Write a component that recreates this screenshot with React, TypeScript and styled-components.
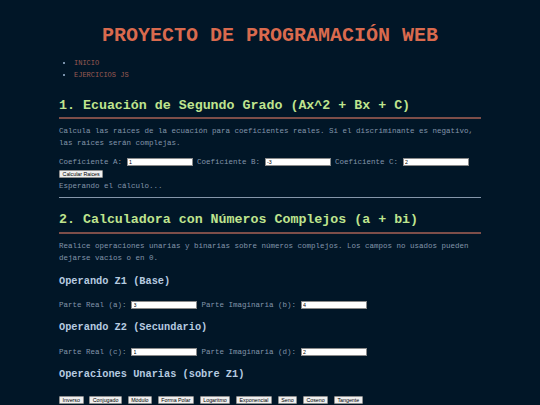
import styled, { createGlobalStyle } from "styled-components";

const GlobalStyle = createGlobalStyle`
    html, body {
        margin: 0;
        padding: 0;
        background-color: #011627;
    }
    body {
        font-family: "Courier New", "Nimbus Mono PS", "FreeMono", "Liberation Mono", monospace;
    }
`

const Page = styled.div`
    padding-top: 24px;
    min-height: 405px;
    box-sizing: border-box;
`
const Titulo = styled.h1`
    margin: 0;
    font-size: 20px;
    line-height: 24px;
    font-weight: bold;
    color: #d96a4e;
    text-align: center;
`
const Contenido = styled.main`
    width: 422px;
    margin: 0 auto;
`
const Menu = styled.ul`
    margin: 9px 0 0;
    padding-left: 15px;
    list-style: disc;
    font-size: 7px;
    line-height: 12px;

    li::marker {
        color: #9fb8d6;
    }
`
const Enlace = styled.a`
    color: #9a5a52;
    text-decoration: none;
`
const Seccion = styled.section<{ $top: number }>`
    margin-top: ${(p) => p.$top}px;
`
const Subtitulo = styled.h2`
    margin: 0;
    font-size: 13.3px;
    line-height: 16px;
    font-weight: bold;
    color: #bfe48e;
    padding-bottom: 3.5px;
    border-bottom: 2px solid #7d4e49;
`
const Texto = styled.p<{ $top?: number }>`
    margin: ${(p) => p.$top ?? 6}px 0 0;
    font-size: 7.5px;
    line-height: 12px;
    color: #8195aa;
`
const Fila = styled.div<{ $top: number }>`
    margin-top: ${(p) => p.$top}px;
    font-size: 7.5px;
    line-height: 12px;
    color: #8195aa;
    white-space: nowrap;
`
const Campo = styled.input`
    box-sizing: border-box;
    width: 66px;
    height: 8px;
    padding: 0 1.5px;
    margin: 0;
    border: 1px solid #8a8a8a;
    background: #ffffff;
    font-family: "Liberation Sans", Arial, sans-serif;
    font-size: 5.3px;
    color: #000000;
    vertical-align: middle;
`
const Boton = styled.button`
    box-sizing: border-box;
    height: 8px;
    padding: 0 2.6px;
    margin: 0;
    border: 1px solid #8f8f8f;
    border-radius: 1px;
    background: #efefef;
    font-family: "Liberation Sans", Arial, sans-serif;
    font-size: 5.3px;
    line-height: 6px;
    color: #000000;
    vertical-align: middle;
`
const Linea = styled.hr`
    margin: 5px 0 0;
    border: 0;
    border-top: 1.5px solid #8596aa;
`
const Operando = styled.h3<{ $top: number }>`
    margin: ${(p) => p.$top}px 0 0;
    font-size: 10.3px;
    line-height: 14px;
    font-weight: bold;
    color: #b6cbe0;
`
const Botonera = styled.div`
    display: flex;
    gap: 5.6px;
    margin-top: 15px;
`

const operacionesUnarias = [
    "Inverso",
    "Conjugado",
    "Módulo",
    "Forma Polar",
    "Logaritmo",
    "Exponencial",
    "Seno",
    "Coseno",
    "Tangente",
]

const App = () => {
    return (
        <Page>
            <GlobalStyle />
            <Titulo>PROYECTO DE PROGRAMACIÓN WEB</Titulo>
            <Contenido>
                <Menu>
                    <li><Enlace href="#">INICIO</Enlace></li>
                    <li><Enlace href="#">EJERCICIOS JS</Enlace></li>
                </Menu>

                <Seccion $top={16.5}>
                    <Subtitulo>1. Ecuación de Segundo Grado (Ax^2 + Bx + C)</Subtitulo>
                    <Texto>
                        Calcula las raices de la ecuación para coeficientes reales. Si el discriminante es negativo, las raices serán complejas.
                    </Texto>
                    <Fila $top={6.6}>
                        Coeficiente A: <Campo defaultValue="1" />{" "}
                        Coeficiente B: <Campo defaultValue="-3" />{" "}
                        Coeficiente C: <Campo defaultValue="2" />
                    </Fila>
                    <Fila $top={0}>
                        <Boton>Calcular Raices</Boton>
                    </Fila>
                    <Texto $top={0}>Esperando el cálculo...</Texto>
                    <Linea />
                </Seccion>

                <Seccion $top={14.5}>
                    <Subtitulo>2. Calculadora con Números Complejos (a + bi)</Subtitulo>
                    <Texto>
                        Realice operaciones unarias y binarias sobre números complejos. Los campos no usados pueden dejarse vacios o en 0.
                    </Texto>

                    <Operando $top={10}>Operando Z1 (Base)</Operando>
                    <Fila $top={11.3}>
                        Parte Real (a): <Campo defaultValue="3" />{" "}
                        Parte Imaginaria (b): <Campo defaultValue="4" />
                    </Fila>

                    <Operando $top={9.4}>Operando Z2 (Secundario)</Operando>
                    <Fila $top={11.3}>
                        Parte Real (c): <Campo defaultValue="1" />{" "}
                        Parte Imaginaria (d): <Campo defaultValue="2" />
                    </Fila>

                    <Operando $top={9.4}>Operaciones Unarias (sobre Z1)</Operando>
                    <Botonera>
                        {operacionesUnarias.map((op) => (
                            <Boton key={op}>{op}</Boton>
                        ))}
                    </Botonera>
                </Seccion>
            </Contenido>
        </Page>
    )
}

export default App;
